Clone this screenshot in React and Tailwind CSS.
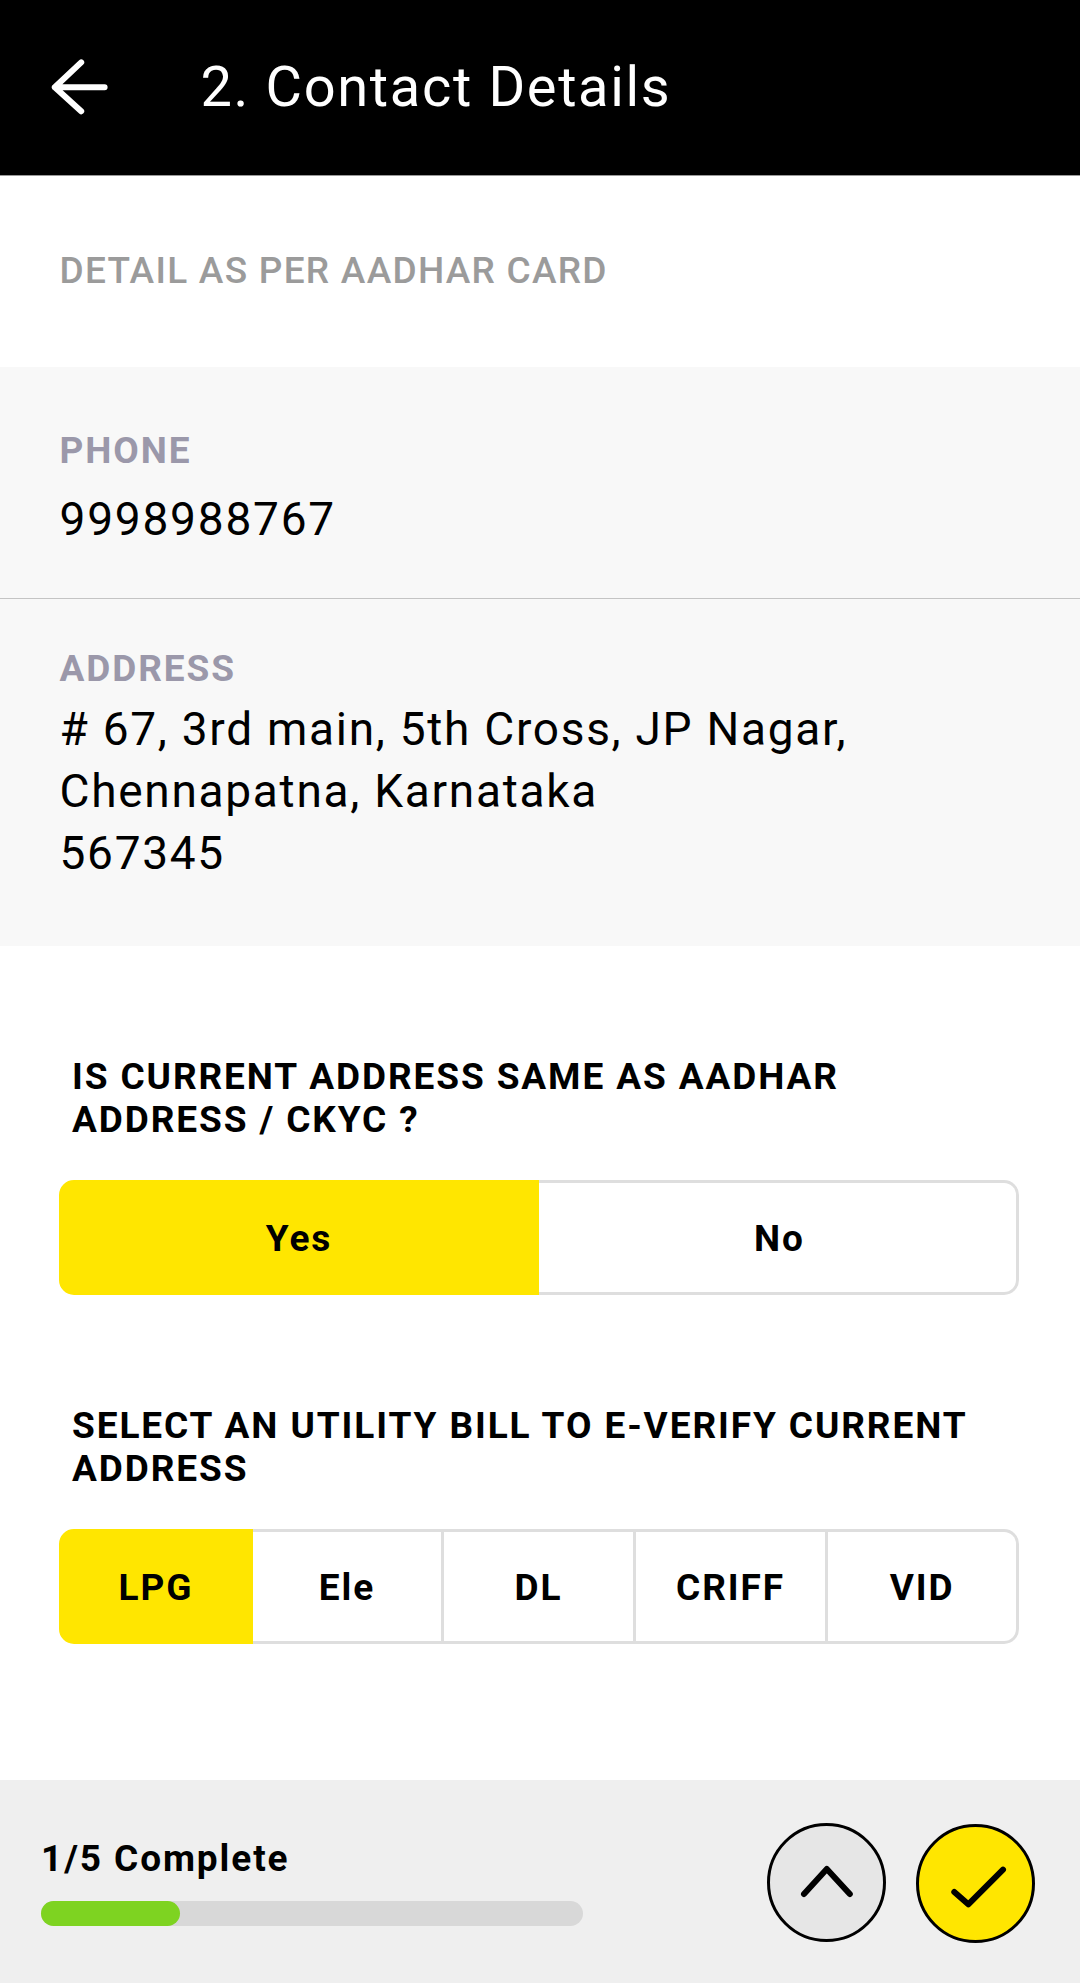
import React, { useState } from 'react';
import clsx from 'clsx';

const UTILITY_BILLS = ['LPG', 'Ele', 'DL', 'CRIFF', 'VID'];

function Header({ title }) {
  return (
    <header className="flex h-[176px] items-center border-b border-[#999999] bg-black pb-[2px] text-white">
      <button className="ml-[51px] h-[56px] w-[58px]" aria-label="Back">
        <svg width="58" height="56" viewBox="0 0 58 56" fill="none" stroke="currentColor" strokeWidth="6" strokeLinecap="round" strokeLinejoin="round">
          <path d="M53.6 28.2H3.8M30.2 3.4L3.8 28.2L30.2 52.2" />
        </svg>
      </button>
      <h1 className="ml-[91.5px] whitespace-nowrap text-[56px] leading-[64px] tracking-[1.65px]">{title}</h1>
    </header>
  );
}

function Segmented({ options, value, onChange, columns }) {
  return (
    <div className={clsx('ml-[59px] grid h-[115px] w-[960px]', columns)}>
      {options.map((option, i) => {
        const active = option === value;
        return (
          <button
            key={option}
            onClick={() => onChange(option)}
            className={clsx(
              'border-y-[3px] border-r-[3px] pt-[3px] text-[37px] font-bold leading-[44px] tracking-[1.9px]',
              i === 0 && 'rounded-l-[15px] border-l-[3px]',
              i === options.length - 1 && 'rounded-r-[15px]',
              i > 0 && options.length === 2 && 'pl-[4px]',
              active ? 'border-[#ffe600] bg-[#ffe600]' : 'border-[#dedede] bg-white'
            )}
          >
            {option}
          </button>
        );
      })}
    </div>
  );
}

function Question({ children }) {
  return (
    <h3 className="pl-[72px] text-[37px] font-bold leading-[43px] tracking-[1.9px]">{children}</h3>
  );
}

function Footer({ step, total }) {
  return (
    <footer className="flex h-[203px] bg-[#efefef]">
      <div className="ml-[41px] w-[542px] pt-[57px]">
        <p className="text-[37px] font-bold leading-[44px] tracking-[1.9px]">
          {step}/{total} Complete
        </p>
        <div className="mt-[20px] h-[25px] rounded-full bg-[#d8d8d8]">
          <div className="h-full w-[139px] rounded-full bg-[#7ed321]" />
        </div>
      </div>
      <button className="ml-[184px] mt-[43px] h-[119px] w-[119px] rounded-full border-[3px] border-black bg-[#e6e6e6]" aria-label="Previous">
        <svg width="113" height="113" viewBox="770 1826 113 113" fill="none" stroke="currentColor" strokeWidth="6" strokeLinecap="round" strokeLinejoin="round">
          <path d="M804 1894L826.8 1869L849.8 1894" />
        </svg>
      </button>
      <button className="ml-[30px] mt-[44px] h-[119px] w-[119px] rounded-full border-[3px] border-black bg-[#ffe600]" aria-label="Confirm">
        <svg width="113" height="113" viewBox="919 1827 113 113" fill="none" stroke="currentColor" strokeWidth="6" strokeLinecap="round" strokeLinejoin="round">
          <path d="M954.3 1892L968.3 1904.3L1003 1869.7" />
        </svg>
      </button>
    </footer>
  );
}

export default function App() {
  const [sameAddress, setSameAddress] = useState('Yes');
  const [bill, setBill] = useState('LPG');

  return (
    <div className="flex h-[1983px] w-[1080px] flex-col bg-white font-[Roboto,sans-serif] text-black">
      <Header title="2. Contact Details" />

      <div className="flex h-[191px] items-center pb-[2px] pl-[59.5px]">
        <h2 className="text-[37px] font-medium leading-[44px] tracking-[1.27px] text-[#9b9b9b]">DETAIL AS PER AADHAR CARD</h2>
      </div>

      <section className="h-[232px] border-b border-[#c4c4c4] bg-[#f8f8f8] pl-[59.5px] pt-[62px]">
        <p className="text-[37px] font-bold leading-[44px] tracking-[1.9px] text-[#9b98aa]">PHONE</p>
        <p className="mt-[15px] text-[46px] leading-[62px] tracking-[1.8px]">9998988767</p>
      </section>
      <section className="h-[347px] bg-[#f8f8f8] pl-[59.5px] pt-[48px]">
        <p className="text-[37px] font-bold leading-[44px] tracking-[1.9px] text-[#9b98aa]">ADDRESS</p>
        <p className="mt-[7px] text-[46px] leading-[62px] tracking-[1.72px]">
          # 67, 3rd main, 5th Cross, JP Nagar,
          <br />
          Chennapatna, Karnataka
          <br />
          567345
        </p>
      </section>

      <main className="flex-1 pt-[109px]">
        <Question>
          IS CURRENT ADDRESS SAME AS AADHAR
          <br />
          ADDRESS / CKYC ?
        </Question>
        <div className="mt-[39px]">
          <Segmented
            columns="grid-cols-2"
            options={['Yes', 'No']}
            value={sameAddress}
            onChange={setSameAddress}
          />
        </div>
        <div className="mt-[109px]">
          <Question>
            SELECT AN UTILITY BILL TO E-VERIFY CURRENT
            <br />
            ADDRESS
          </Question>
        </div>
        <div className="mt-[39px]">
          <Segmented
            columns="grid-cols-[194px_191px_192px_192px_191px]"
            options={UTILITY_BILLS}
            value={bill}
            onChange={setBill}
          />
        </div>
      </main>

      <Footer step={1} total={5} />
    </div>
  );
}
